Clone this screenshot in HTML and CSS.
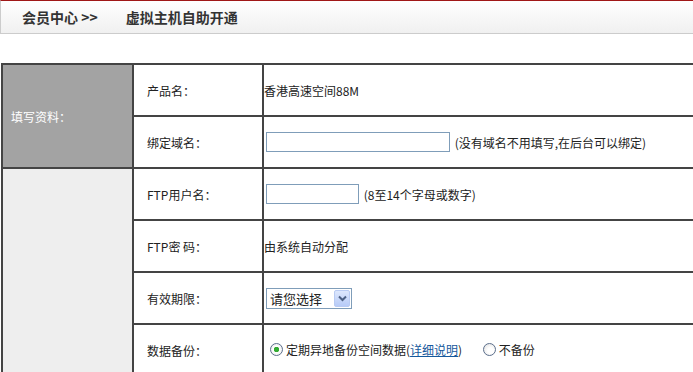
FILE: index.html
```html
<!DOCTYPE html>
<html lang="zh-CN">
<head>
  <meta charset="UTF-8" />
  <title>虚拟主机自助开通</title>
  <link rel="stylesheet" href="styles.css">
</head>
<body>
  <div class="page">
    <div class="crumb">
      <span class="crumb-home">会员中心 &gt;&gt;</span>
      <span class="crumb-title">虚拟主机自助开通</span>
    </div>

    <table class="form-table">
      <colgroup>
        <col class="col-group">
        <col class="col-label">
        <col class="col-value">
      </colgroup>
      <tr>
        <td class="group group-dark" rowspan="2">填写资料：</td>
        <td class="label">产品名：</td>
        <td class="value">香港高速空间88M</td>
      </tr>
      <tr>
        <td class="label">绑定域名：</td>
        <td class="value">
          <input type="text" class="field field-wide">
          <span class="hint">(没有域名不用填写,在后台可以绑定)</span>
        </td>
      </tr>
      <tr>
        <td class="group group-light" rowspan="4"></td>
        <td class="label">FTP用户名：</td>
        <td class="value">
          <input type="text" class="field field-short">
          <span class="hint">(8至14个字母或数字)</span>
        </td>
      </tr>
      <tr>
        <td class="label">FTP密 码：</td>
        <td class="value">由系统自动分配</td>
      </tr>
      <tr>
        <td class="label">有效期限：</td>
        <td class="value">
          <span class="select-wrap">
            <select class="select">
              <option>请您选择</option>
              <option>一年</option>
              <option>两年</option>
            </select>
            <span class="select-btn">
              <svg width="9" height="7" viewBox="0 0 9 7"><path d="M1 1.5 L4.5 5 L8 1.5" fill="none" stroke="#4d6185" stroke-width="2"/></svg>
            </span>
          </span>
        </td>
      </tr>
      <tr>
        <td class="label">数据备份：</td>
        <td class="value">
          <label class="choice"><input type="radio" name="backup" class="radio" checked>定期异地备份空间数据(<a href="#" class="link">详细说明</a>)</label>
          <label class="choice choice-off"><input type="radio" name="backup" class="radio">不备份</label>
        </td>
      </tr>
    </table>
  </div>
</body>
</html>
```

FILE: styles.css
```css
html, body {
  margin: 0;
  overflow: hidden;
}

body {
  background-color: #ffffff;
  color: #222;
  font-family: "Noto Sans CJK SC", "Liberation Sans", sans-serif;
  font-size: 12px;
}

.page {
  padding-left: 1px;
  width: 780px;
}

.crumb {
  height: 32px;
  border-top: 1px solid #a01818;
  border-bottom: 1px solid #cccccc;
  border-left: 1px solid #cccccc;
  margin-left: -1px;
  padding-left: 21px;
  background: linear-gradient(#ffffff, #f0f0f0);
  display: flex;
  align-items: center;
  font-size: 14px;
  font-weight: bold;
  color: #333;
}

.crumb-home {
  margin-right: 28px;
}

.form-table {
  margin-top: 29px;
  width: 760px;
  table-layout: fixed;
  border-collapse: collapse;
}

.col-group {
  width: 131px;
}

.col-label {
  width: 130px;
}

.form-table td {
  border: 2px solid #444;
  height: 50px;
  padding: 0;
  vertical-align: middle;
}

.group {
  padding-left: 8px !important;
  color: #ffffff;
}

.group-dark {
  background-color: #a3a3a3;
}

.group-light {
  background-color: #eeeeee;
}

.label {
  padding-left: 13px !important;
}

.value {
  white-space: nowrap;
}

.field {
  box-sizing: border-box;
  height: 20px;
  margin: 0 0 0 2px;
  border: 1px solid #7f9db9;
  vertical-align: middle;
}

.field-wide {
  width: 184px;
}

.field-short {
  width: 93px;
}

.hint {
  margin-left: 2px;
  vertical-align: middle;
}

.select-wrap {
  position: relative;
  display: inline-block;
  margin-left: 2px;
  vertical-align: middle;
}

.select {
  appearance: none;
  -webkit-appearance: none;
  box-sizing: border-box;
  width: 86px;
  height: 21px;
  border: 1px solid #7f9db9;
  border-radius: 0;
  background: #ffffff;
  padding: 0 0 0 3px;
  font-family: inherit;
  font-size: 13px;
  color: #222;
  display: block;
}

.select-btn {
  position: absolute;
  top: 2px;
  right: 2px;
  width: 16px;
  height: 17px;
  box-sizing: border-box;
  border: 1px solid #b9cbf3;
  border-radius: 2px;
  background: linear-gradient(#dde7fd, #b7cbf7);
  display: flex;
  align-items: center;
  justify-content: center;
  pointer-events: none;
}

.choice {
  display: inline-flex;
  align-items: center;
  margin-left: 6px;
}

.choice-off {
  margin-left: 18px;
}

.radio {
  appearance: none;
  -webkit-appearance: none;
  width: 13px;
  height: 13px;
  margin: 0 3px 0 0;
  border: 1px solid #5c6f8c;
  border-radius: 50%;
  background: radial-gradient(circle at 60% 60%, #ffffff 30%, #dcdcdc 100%);
}

.radio:checked {
  background: radial-gradient(circle, #2fb32f 0, #35a735 2.5px, #ffffff 3px, #e4e4e4 100%);
}

.link {
  color: #15589c;
  text-decoration: underline;
}
```
